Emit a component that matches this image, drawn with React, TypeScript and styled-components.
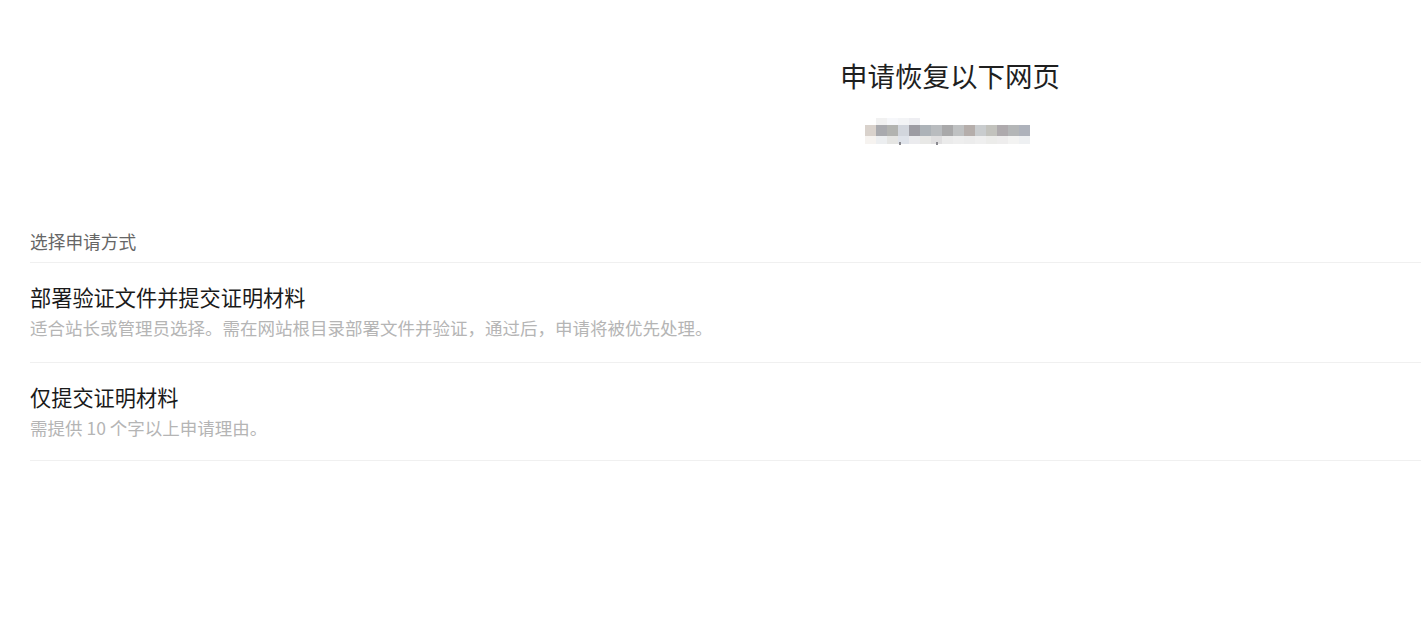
import React from "react";
import styled, { createGlobalStyle } from "styled-components";

const GlobalStyle = createGlobalStyle`
  html, body {
    margin: 0;
    padding: 0;
    background: #fff;
    overflow: hidden;
  }
  body {
    font-family: "Noto Sans CJK SC", "Noto Sans", sans-serif;
  }
`;

const maskTop = ["", "#f1f1f1", "#f6f7fa", "#f3f4f6", "#eeeef2"];
const maskMid = [
  "#d9d2cc", "#a9aaae", "#b2b3b0", "#d2d6dd", "#9d9ca3",
  "#adb3b8", "#b9bcbf", "#a9a9aa", "#bfc1c2", "#b5aeab",
  "#c9ccce", "#c2c2bd", "#aeaaad", "#b4b6b7", "#aeb2bb",
];
const maskBottom = [
  "#f6f3f0", "#eceef0", "#e5e5e3", "#dfe3ea", "#ebebee",
  "#e8e8e6", "#e0dfe0", "#ebebeb", "#eeeeee", "#ececec",
  "#efefef", "#ececea", "#eeeded", "#f3f3f2", "#eef0f2",
];

const options = [
  {
    title: "部署验证文件并提交证明材料",
    desc: "适合站长或管理员选择。需在网站根目录部署文件并验证，通过后，申请将被优先处理。",
  },
  {
    title: "仅提交证明材料",
    desc: "需提供 10 个字以上申请理由。",
  },
];

// pixelated placeholder for the masked url
const BlurredUrl = () => (
  <svg width="170" height="27" viewBox="0 0 170 27">
    {maskTop.map((c, i) =>
      c ? <rect key={"t" + i} x={i * 11} y={0} width={11} height={7} fill={c} /> : null
    )}
    {maskMid.map((c, i) => (
      <rect key={"m" + i} x={i * 11} y={7} width={11} height={11} fill={c} />
    ))}
    {maskBottom.map((c, i) => (
      <rect key={"b" + i} x={i * 11} y={18} width={11} height={8} fill={c} />
    ))}
    <rect x={34} y={24} width={2} height={3} fill="#8a8a90" />
    <rect x={71} y={24} width={2} height={3} fill="#8a8a90" />
  </svg>
);

export default function App() {
  return (
    <Page>
      <GlobalStyle />
      <Header>
        <Title>申请恢复以下网页</Title>
        <UrlMask>
          <BlurredUrl />
        </UrlMask>
      </Header>

      <Section>
        <SectionLabel>选择申请方式</SectionLabel>
        {options.map((o) => (
          <Option key={o.title}>
            <OptionTitle>{o.title}</OptionTitle>
            <OptionDesc>{o.desc}</OptionDesc>
          </Option>
        ))}
      </Section>
    </Page>
  );
}

const Page = styled.div`
  padding-left: 30px;
`;

const Header = styled.div`
  display: flex;
  flex-direction: column;
  align-items: center;
  padding: 55px 0 0 449px;
`;

const Title = styled.h1`
  margin: 0;
  font-size: 27.5px;
  line-height: 40px;
  font-weight: 400;
  color: #1f1f1f;
`;

const UrlMask = styled.div`
  margin-top: 23px;
  height: 27px;
  display: flex;
  svg {
    display: block;
  }
`;

const Section = styled.div`
  margin-top: 84px;
`;

const SectionLabel = styled.div`
  font-size: 17.7px;
  line-height: 24px;
  color: #666;
  padding-bottom: 9px;
  border-bottom: 1px solid #f0f0f0;
`;

const Option = styled.div`
  padding: 19px 0 21px;
  border-bottom: 1px solid #f0f0f0;
  cursor: pointer;

  & + & {
    padding-bottom: 19px;
  }
`;

const OptionTitle = styled.div`
  font-size: 21.2px;
  line-height: 30px;
  color: #1a1a1a;
`;

const OptionDesc = styled.div`
  margin-top: 3px;
  font-size: 17.5px;
  line-height: 26px;
  color: #b5b5b5;
`;
